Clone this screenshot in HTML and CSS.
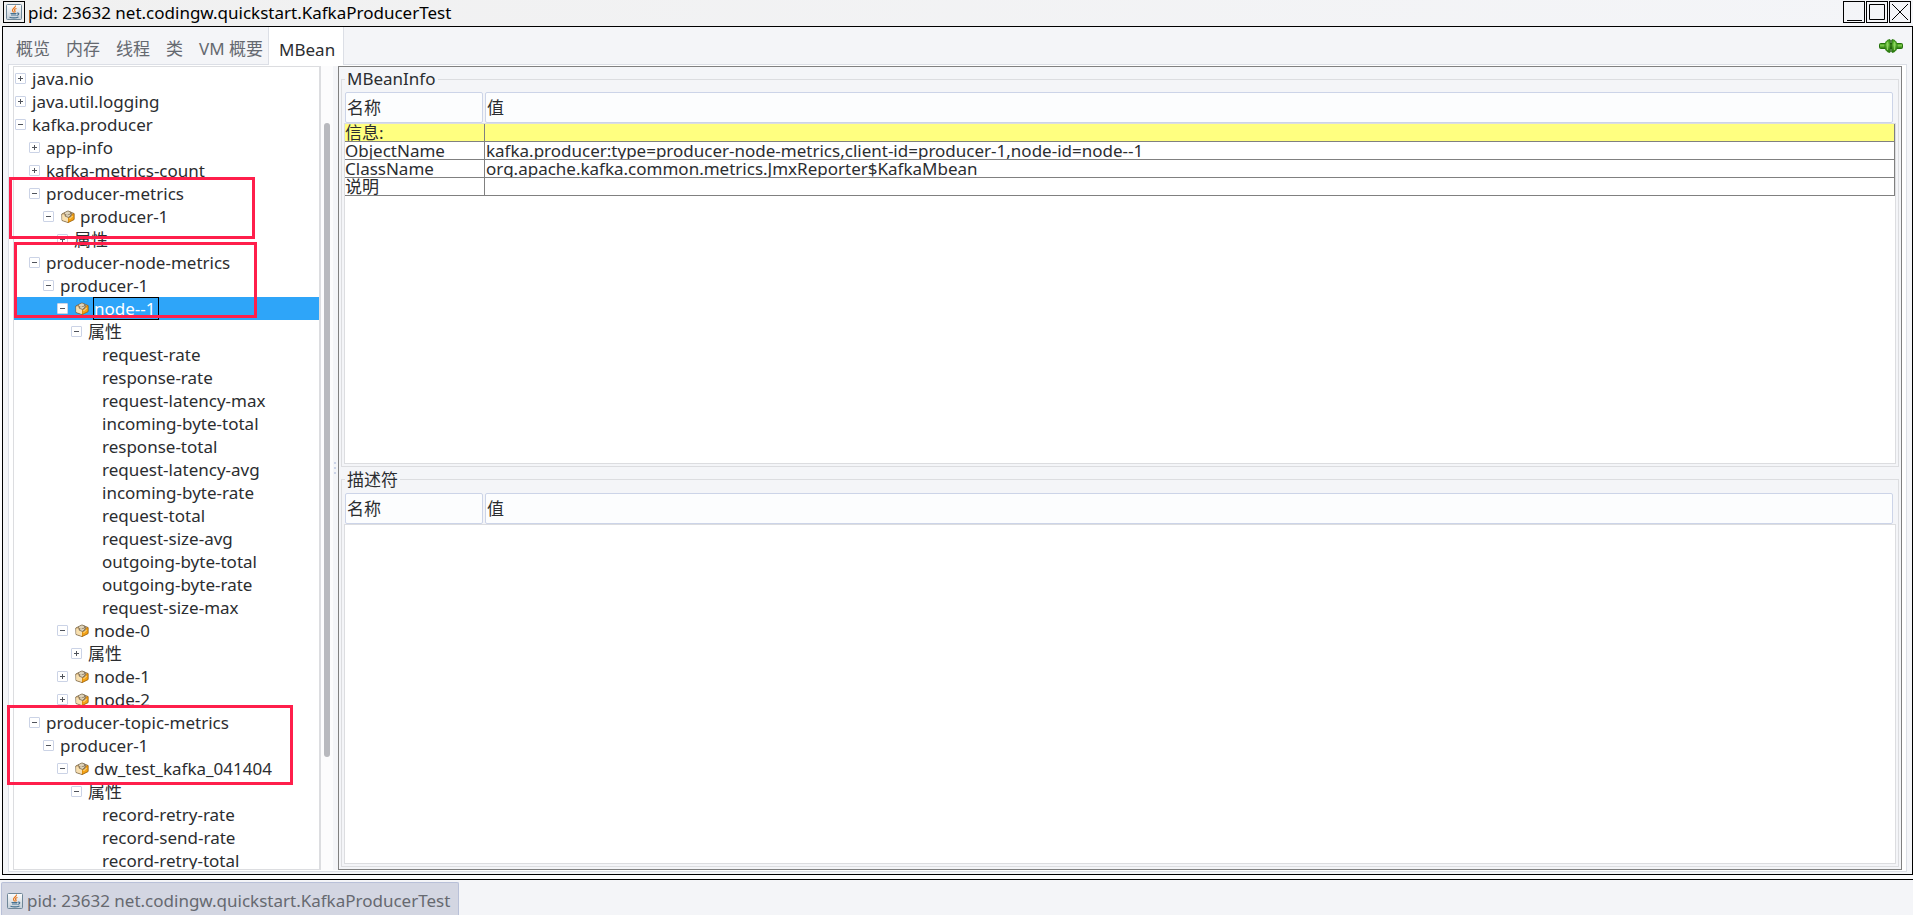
FILE: index.html
```html
<!DOCTYPE html>
<html lang="zh-CN">
<head>
<meta charset="utf-8">
<title>pid: 23632 net.codingw.quickstart.KafkaProducerTest</title>
<link rel="stylesheet" href="styles.css">
</head>
<body>
<svg class="defs" aria-hidden="true">
  <defs>
    <linearGradient id="cup-bg" x1="0" y1="0" x2="0" y2="1"><stop offset="0" stop-color="#fdfdfd"/><stop offset="1" stop-color="#c3ced8"/></linearGradient>
    <linearGradient id="plug-bg" x1="0" y1="0" x2="0" y2="1"><stop offset="0" stop-color="#3f9a17"/><stop offset=".4" stop-color="#79c84a"/><stop offset="1" stop-color="#236f08"/></linearGradient>
    <symbol id="java" viewBox="0 0 16 16">
      <rect x=".5" y=".5" width="15" height="15" rx="1" fill="url(#cup-bg)" stroke="#6f8798"/>
      <path d="M9.500 1.500C10 3.500 6 4.500 6.500 6.500 6.700 7.500 7.500 7.800 7.500 8.500M10.500 4.500C8.500 5 8 6 9 7 9.300 7.500 9 8 8.500 8.500" fill="none" stroke="#e8751a" stroke-width="1.200"/>
      <path d="M4.500 9.500H10.500M5 11H10M11 9.200C13.500 8.500 13.500 11 10.500 11.500M3.500 13.200C6 14 10 14 12.500 13" fill="none" stroke="#45708f" stroke-width="1.100"/>
    </symbol>
    <symbol id="bean" viewBox="0 0 14 14">
      <path d="M.8 4 7 1 13 3.500V9.500L7 12.500 1 10.500Z" fill="#e9c58d" stroke="#6e5a38" stroke-width=".8"/>
      <path d="M7 6 13 3.500V9.500L7 12.500Z" fill="#f4a316" stroke="#b36b05" stroke-width=".7"/>
      <path d="M1.200 4.500 7 6.500V12L1.200 10Z" fill="#f6dfb4"/>
      <path d="M3 2.800 7 .8 11 2.200 10.500 6.500 7.500 8 4 6.500Z" fill="#8c7c62"/>
      <path d="M4 3.300 7 1.800 9 3 6 4.500ZM5 5.500 7.500 6.500 9.500 4.500" fill="#d8d1bf" stroke="#eee1c3" stroke-width=".8"/>
      <path d="M2.500 6.500 5 9.500M8.500 9 11.500 6" stroke="#ffe5a1" stroke-width="1"/>
    </symbol>
    <symbol id="plug" viewBox="0 0 24 14">
      <rect x=".5" y="4.500" width="23" height="5" rx="1" fill="url(#plug-bg)" stroke="#24700b"/>
      <path d="M11 .7C7.500.7 6 3.500 6 7S7.500 13.300 11 13.300ZM13 .7C16.500.7 18 3.500 18 7S16.500 13.300 13 13.300Z" fill="url(#plug-bg)" stroke="#2c7f10"/>
      <path d="M8.500 3V11M15.500 3V11" stroke="#8bd45e"/>
      <path d="M12 1V13" stroke="#174e05"/>
    </symbol>
  </defs>
</svg>

<header class="titlebar">
  <button class="frame-btn" aria-label="窗口菜单"><svg class="java"><use href="#java"/></svg></button>
  <h1 class="title">pid: 23632 net.codingw.quickstart.KafkaProducerTest</h1>
  <div class="frame-btns">
    <button class="frame-btn" aria-label="最小化"><svg viewBox="0 0 20 20"><path d="M3 18.500H18"/></svg></button>
    <button class="frame-btn" aria-label="最大化"><svg viewBox="0 0 20 20"><path d="M2.500 2.500H17.500V17.500H2.500Z"/></svg></button>
    <button class="frame-btn" aria-label="关闭"><svg viewBox="0 0 20 20"><path d="M2 2 18 18M18 2 2 18"/></svg></button>
  </div>
</header>

<main class="window">
  <div class="tabbar">
    <div class="tabs" role="tablist">
      <button class="tab" role="tab">概览</button>
      <button class="tab" role="tab">内存</button>
      <button class="tab" role="tab">线程</button>
      <button class="tab" role="tab">类</button>
      <button class="tab" role="tab">VM 概要</button>
      <button class="tab tab-active" role="tab" aria-selected="true">MBean</button>
    </div>
    <svg class="plug" role="img" aria-label="已连接"><use href="#plug"/></svg>
  </div>

  <div class="content">
    <div class="tree" role="tree">
      <div class="node l0" role="treeitem"><button class="toggle plus" aria-label="展开"></button><span>java.nio</span></div>
      <div class="node l0" role="treeitem"><button class="toggle plus" aria-label="展开"></button><span>java.util.logging</span></div>
      <div class="node l0" role="treeitem"><button class="toggle" aria-label="折叠"></button><span>kafka.producer</span></div>
      <div class="node l1" role="treeitem"><button class="toggle plus" aria-label="展开"></button><span>app-info</span></div>
      <div class="node l1" role="treeitem"><button class="toggle plus" aria-label="展开"></button><span>kafka-metrics-count</span></div>
      <div class="node l1" role="treeitem"><button class="toggle" aria-label="折叠"></button><span>producer-metrics</span></div>
      <div class="node l2" role="treeitem"><button class="toggle" aria-label="折叠"></button><svg class="bean"><use href="#bean"/></svg><span>producer-1</span></div>
      <div class="node l3" role="treeitem"><button class="toggle plus" aria-label="展开"></button><span>属性</span></div>
      <div class="node l1" role="treeitem"><button class="toggle" aria-label="折叠"></button><span>producer-node-metrics</span></div>
      <div class="node l2" role="treeitem"><button class="toggle" aria-label="折叠"></button><span>producer-1</span></div>
      <div class="node l3 selected" role="treeitem" aria-selected="true"><button class="toggle" aria-label="折叠"></button><svg class="bean"><use href="#bean"/></svg><span>node--1</span></div>
      <div class="node l4" role="treeitem"><button class="toggle" aria-label="折叠"></button><span>属性</span></div>
      <div class="node leaf" role="treeitem"><span>request-rate</span></div>
      <div class="node leaf" role="treeitem"><span>response-rate</span></div>
      <div class="node leaf" role="treeitem"><span>request-latency-max</span></div>
      <div class="node leaf" role="treeitem"><span>incoming-byte-total</span></div>
      <div class="node leaf" role="treeitem"><span>response-total</span></div>
      <div class="node leaf" role="treeitem"><span>request-latency-avg</span></div>
      <div class="node leaf" role="treeitem"><span>incoming-byte-rate</span></div>
      <div class="node leaf" role="treeitem"><span>request-total</span></div>
      <div class="node leaf" role="treeitem"><span>request-size-avg</span></div>
      <div class="node leaf" role="treeitem"><span>outgoing-byte-total</span></div>
      <div class="node leaf" role="treeitem"><span>outgoing-byte-rate</span></div>
      <div class="node leaf" role="treeitem"><span>request-size-max</span></div>
      <div class="node l3" role="treeitem"><button class="toggle" aria-label="折叠"></button><svg class="bean"><use href="#bean"/></svg><span>node-0</span></div>
      <div class="node l4" role="treeitem"><button class="toggle plus" aria-label="展开"></button><span>属性</span></div>
      <div class="node l3" role="treeitem"><button class="toggle plus" aria-label="展开"></button><svg class="bean"><use href="#bean"/></svg><span>node-1</span></div>
      <div class="node l3" role="treeitem"><button class="toggle plus" aria-label="展开"></button><svg class="bean"><use href="#bean"/></svg><span>node-2</span></div>
      <div class="node l1" role="treeitem"><button class="toggle" aria-label="折叠"></button><span>producer-topic-metrics</span></div>
      <div class="node l2" role="treeitem"><button class="toggle" aria-label="折叠"></button><span>producer-1</span></div>
      <div class="node l3" role="treeitem"><button class="toggle" aria-label="折叠"></button><svg class="bean"><use href="#bean"/></svg><span>dw_test_kafka_041404</span></div>
      <div class="node l4" role="treeitem"><button class="toggle" aria-label="折叠"></button><span>属性</span></div>
      <div class="node leaf" role="treeitem"><span>record-retry-rate</span></div>
      <div class="node leaf" role="treeitem"><span>record-send-rate</span></div>
      <div class="node leaf" role="treeitem"><span>record-retry-total</span></div>
    </div>
    <div class="scrollbar"><div class="thumb"></div></div>
    <div class="divider"><i></i><i></i><i></i></div>

    <section class="details">
      <fieldset class="group">
        <legend>MBeanInfo</legend>
        <div class="pane">
          <table>
            <colgroup><col class="name-col"><col></colgroup>
            <thead><tr><th scope="col"><div>名称</div></th><th scope="col"><div>值</div></th></tr></thead>
            <tbody>
              <tr class="info"><td><div>信息:</div></td><td></td></tr>
              <tr><td><div>ObjectName</div></td><td><div>kafka.producer:type=producer-node-metrics,client-id=producer-1,node-id=node--1</div></td></tr>
              <tr><td><div>ClassName</div></td><td><div>org.apache.kafka.common.metrics.JmxReporter$KafkaMbean</div></td></tr>
              <tr><td><div>说明</div></td><td></td></tr>
            </tbody>
          </table>
        </div>
      </fieldset>
      <fieldset class="group">
        <legend>描述符</legend>
        <div class="pane">
          <table>
            <colgroup><col class="name-col"><col></colgroup>
            <thead><tr><th scope="col"><div>名称</div></th><th scope="col"><div>值</div></th></tr></thead>
          </table>
        </div>
      </fieldset>
    </section>

    <div class="mark mark-metrics"></div>
    <div class="mark mark-node"></div>
    <div class="mark mark-topic"></div>
  </div>
</main>

<footer class="taskbar">
  <button class="task"><svg class="java"><use href="#java"/></svg><span>pid: 23632 net.codingw.quickstart.KafkaProducerTest</span></button>
</footer>
</body>
</html>
```
FILE: styles.css
```css
* { box-sizing: border-box; }

body {
  display: flex;
  flex-direction: column;
  height: 100vh;
  margin: 0;
  overflow: hidden;
  background: #fcfcfd;
  color: #2b2d30;
  font: 17px/23px "Noto Sans", "Noto Sans CJK SC", sans-serif;
}

button {
  padding: 0;
  border: 0;
  background: none;
  color: inherit;
  font: inherit;
}

.defs { position: absolute; width: 0; height: 0; }

.titlebar {
  display: flex;
  flex: none;
  align-items: flex-start;
  height: 26px;
  padding: 1px 2px 0 3px;
  background: linear-gradient(90deg, #f0f0f0, #f4f5f8);
}
.title {
  flex: 1;
  margin: 0 0 0 3px;
  color: #000;
  font-size: 17px;
  font-weight: 400;
}
.frame-btns { display: flex; gap: 1px; }
.frame-btn {
  display: flex;
  align-items: center;
  justify-content: center;
  width: 22px;
  height: 22px;
  border: 1px solid #000;
}
.frame-btn svg {
  width: 20px;
  height: 20px;
  fill: none;
  stroke: #000;
}
.java, .frame-btn .java { width: 16px; height: 16px; stroke: none; }

.window {
  display: flex;
  flex: 1;
  flex-direction: column;
  min-height: 0;
  margin-left: 2px;
  padding: 0 5px 2px;
  border: 1px solid #000;
  background: #f4f5f8;
}

.tabbar {
  display: flex;
  flex: none;
  align-items: flex-start;
  justify-content: space-between;
  height: 37px;
  padding-right: 4px;
}
.tabs { display: flex; height: 37px; }
.tab {
  padding: 6px 8px 0;
  color: #656970;
}
.tab-active {
  position: relative;
  z-index: 1;
  height: 38px;
  margin-left: -3px;
  padding: 6px 8px 0 10px;
  border: solid #dcdfe6;
  border-width: 0 1px;
  background: #fff;
  color: #2b2d30;
}
.plug { width: 24px; height: 14px; margin-top: 12px; }

.content {
  position: relative;
  display: flex;
  flex: 1;
  min-height: 0;
  padding: 1px 4px 1px;
  border: 1px solid #dcdfe6;
  background: #fff;
}

.tree {
  flex: none;
  width: 308px;
  overflow: hidden;
  border: 1px solid #dcdde0;
  border-right-width: 2px;
  background: #fff;
}
.node {
  display: flex;
  align-items: center;
  height: 23px;
  white-space: nowrap;
}
.l0 { padding-left: 1px; }
.l1 { padding-left: 15px; }
.l2 { padding-left: 29px; }
.l3 { padding-left: 43px; }
.l4 { padding-left: 57px; }
.leaf { padding-left: 88px; }
.selected { background: #2ea5f9; color: #fff; }
.selected span {
  height: 23px;
  margin-left: -1px;
  padding: 0 2px 0 0;
  border: 1px solid #000;
  line-height: 21px;
}

.toggle {
  flex: none;
  width: 11px;
  height: 11px;
  margin-right: 6px;
  border: 1px solid #cbd3e6;
  border-radius: 1px;
  background: linear-gradient(#50545c, #50545c) center / 5px 1px no-repeat #fff;
}
.plus {
  background:
    linear-gradient(#50545c, #50545c) center / 5px 1px no-repeat,
    linear-gradient(#50545c, #50545c) center / 1px 5px no-repeat #fff;
}
.bean { flex: none; width: 14px; height: 14px; margin: 0 5px 0 1px; }

.scrollbar {
  flex: none;
  width: 12px;
  padding: 57px 3px 113px;
  background: #fcfcfd;
}
.thumb { height: 100%; border-radius: 3px; background: #b8b9be; }

.divider {
  display: flex;
  flex: none;
  flex-direction: column;
  align-items: flex-start;
  justify-content: center;
  gap: 3px;
  width: 5px;
  padding-left: 1px;
  background: #f4f5f8;
}
.divider i { width: 2px; height: 2px; background: #ccd4e8; }

.details {
  display: flex;
  flex: 1;
  flex-direction: column;
  gap: 1px;
  min-width: 0;
  padding: 0 2px 2px;
  border: 1px solid #808080;
  background: #f4f5f8;
}

.group {
  display: flex;
  flex: 1;
  flex-direction: column;
  min-width: 0;
  min-height: 0;
  margin: 0;
  padding: 0 2px 2px;
  border: 1px solid #dcdde0;
}
.group legend {
  height: 24px;
  margin-left: 1px;
  padding: 0 2px;
}

.pane {
  position: relative;
  flex: 1;
  padding: 0 1px;
}
.pane::before {
  position: absolute;
  inset: 32px 0 0;
  border: 1px solid #dcdde0;
  background: #fff;
  content: "";
}

table {
  position: relative;
  width: 100%;
  border-spacing: 0;
  table-layout: fixed;
}
.name-col { width: 140px; }
th {
  height: 33px;
  padding: 1px 2px 1px 0;
  font-weight: 400;
  text-align: left;
}
th div {
  height: 31px;
  padding: 0 1px;
  border: 1px solid #ccd4e8;
  border-radius: 2px;
  background: #fcfdfe;
  line-height: 29px;
}
td {
  height: 18px;
  padding: 0 1px;
  border: solid #808080;
  border-width: 0 1px 1px 0;
}
td div {
  height: 17px;
  overflow: hidden;
  line-height: 17px;
  white-space: nowrap;
}
td:first-child { padding-left: 0; }
.info { background: #ffff80; }

.mark {
  position: absolute;
  border: 3px solid #ff1f4b;
  pointer-events: none;
}
.mark-metrics { top: 112px; left: 0; width: 246px; height: 62px; }
.mark-node { top: 177px; left: 5px; width: 243px; height: 76px; }
.mark-topic { top: 640px; left: -2px; width: 286px; height: 80px; }

.taskbar {
  display: flex;
  flex: none;
  height: 36px;
  margin-top: 4px;
  padding: 2px 1px 0;
  border-top: 1px solid #000;
  background: #f4f5f8;
}
.task {
  display: flex;
  align-items: center;
  gap: 4px;
  padding: 3px 8px 0 5px;
  border: 1px solid #b8c0d8;
  border-bottom: 0;
  border-radius: 2px 2px 0 0;
  background: #d3d6e2;
  color: #666970;
}
```
